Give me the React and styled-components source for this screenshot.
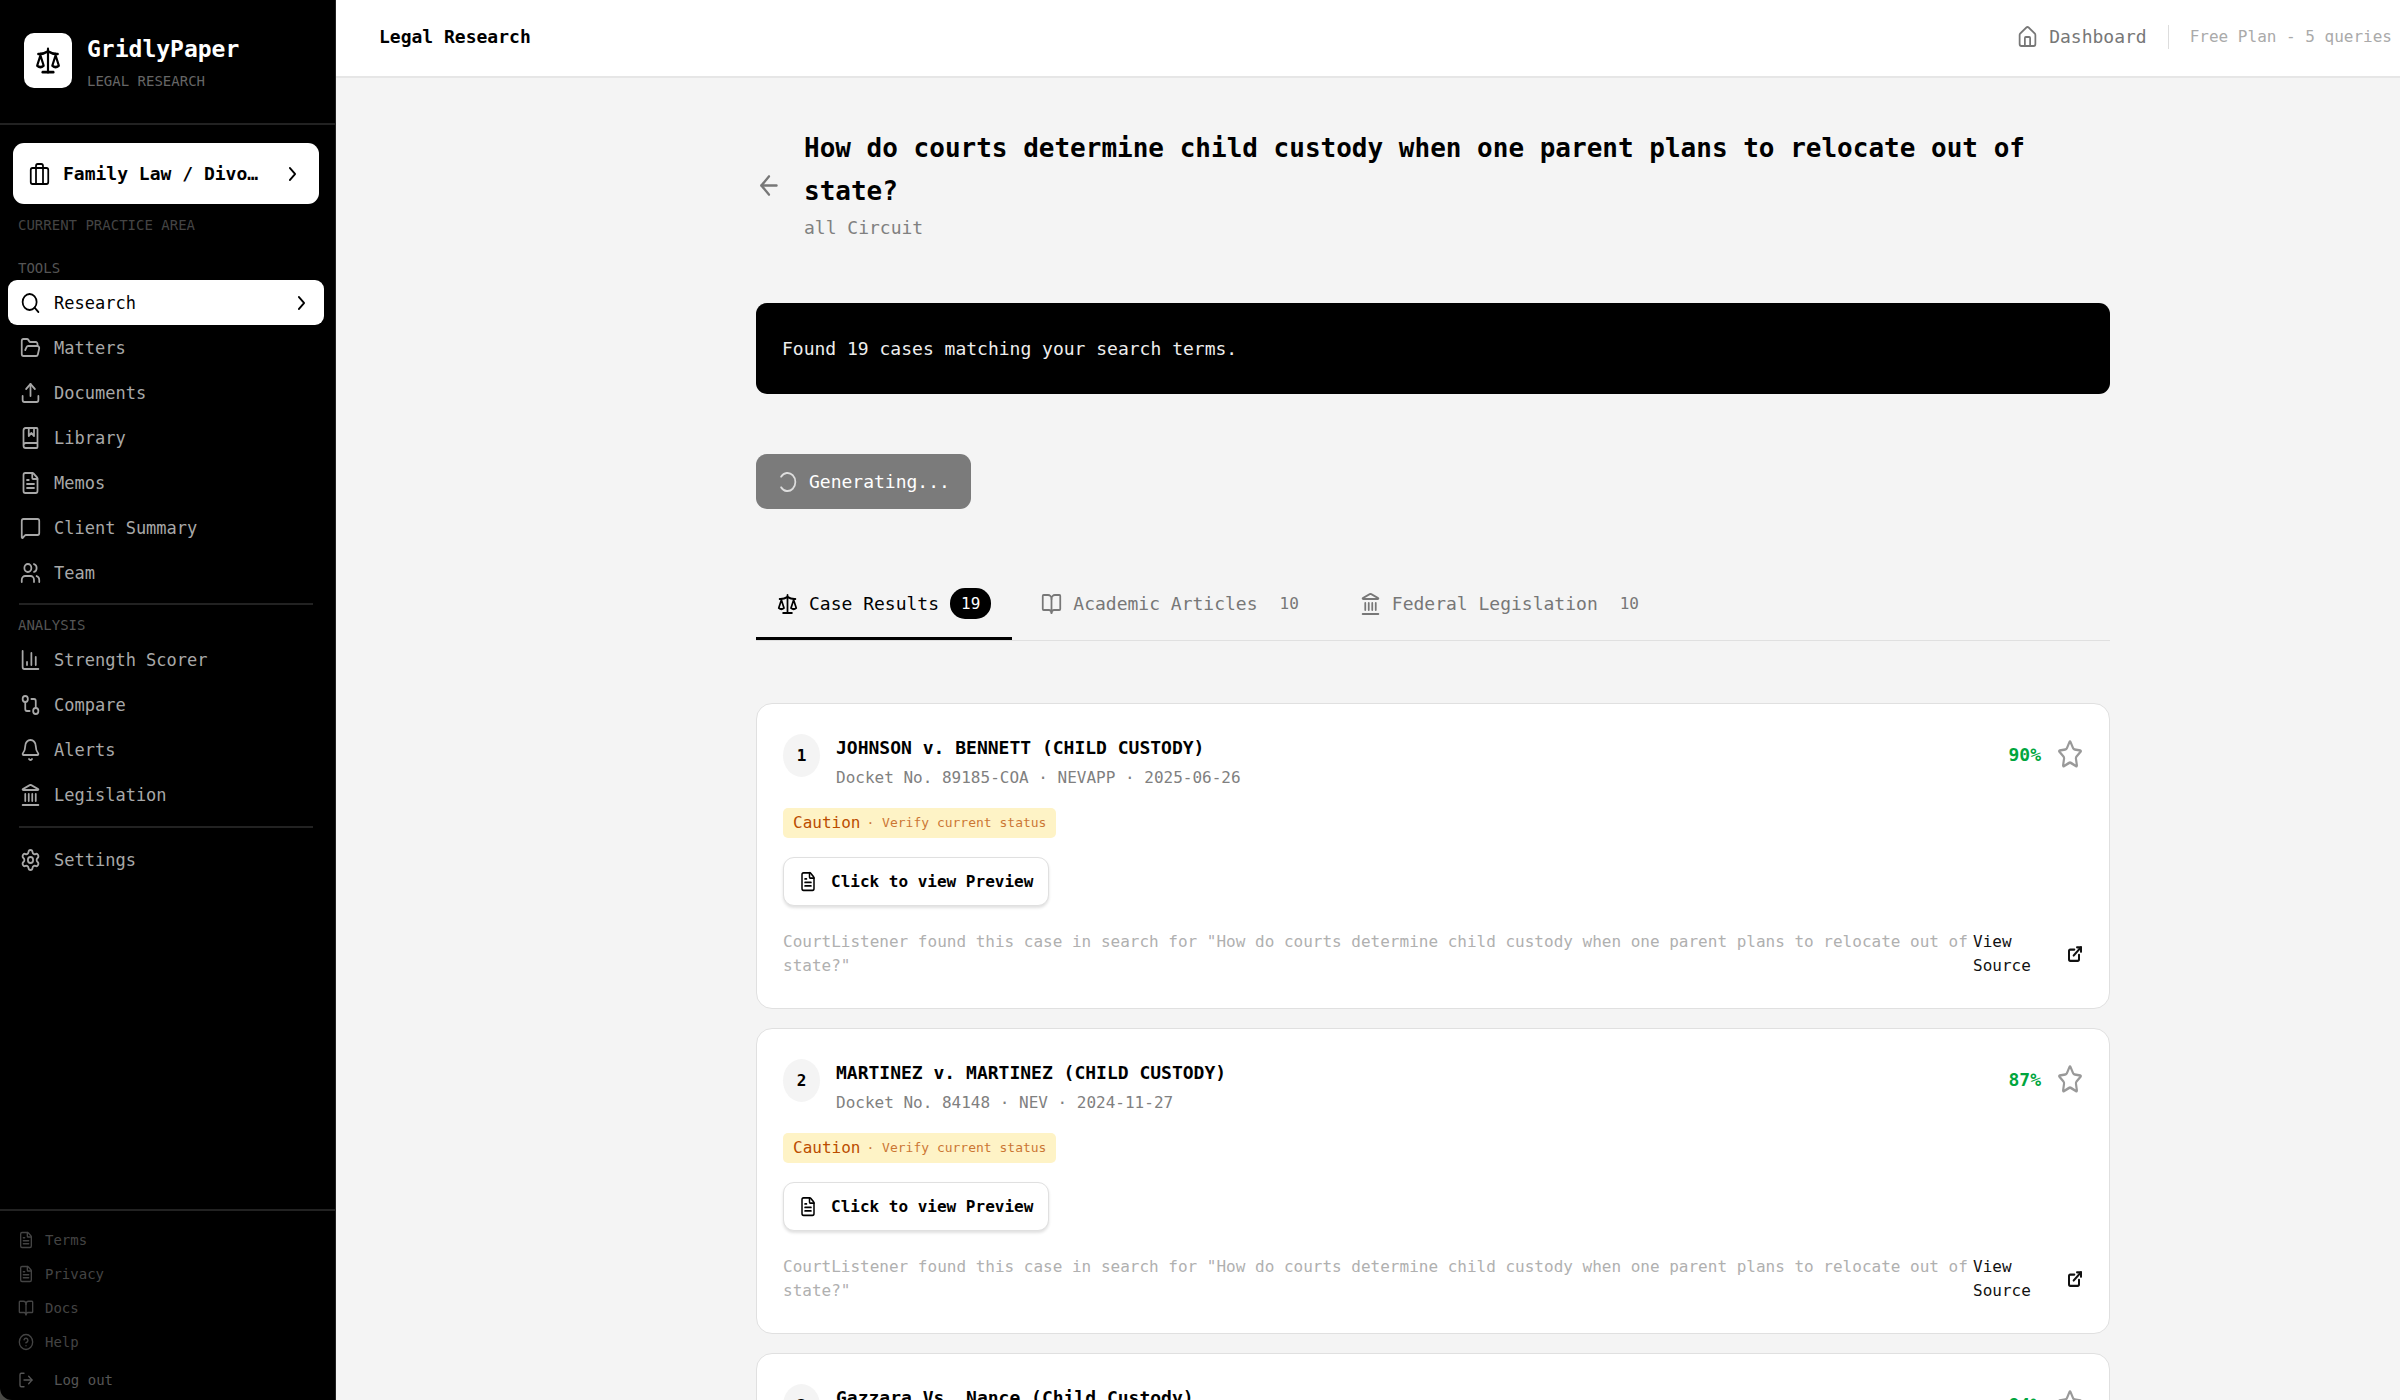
import { useState } from "react";
import styled, { createGlobalStyle, css } from "styled-components";
import {
    ArrowLeft,
    Bell,
    BookMarked,
    BookOpen,
    ChevronRight,
    CircleHelp,
    ExternalLink,
    FileText,
    FolderOpen,
    GitCompare,
    House,
    Landmark,
    LogOut,
    MessageSquare,
    Scale,
    Search,
    Settings,
    Star,
    Upload,
    Users,
} from "lucide-react";

const question = "How do courts determine child custody when one parent plans to relocate out of state?";

const tools = [
    { label: "Research", icon: Search },
    { label: "Matters", icon: FolderOpen },
    { label: "Documents", icon: Upload },
    { label: "Library", icon: BookMarked },
    { label: "Memos", icon: FileText },
    { label: "Client Summary", icon: MessageSquare },
    { label: "Team", icon: Users },
];

const analysis = [
    { label: "Strength Scorer", icon: BarsIcon },
    { label: "Compare", icon: GitCompare },
    { label: "Alerts", icon: Bell },
    { label: "Legislation", icon: Landmark },
];

const footerLinks = [
    { label: "Terms", icon: FileText },
    { label: "Privacy", icon: FileText },
    { label: "Docs", icon: BookOpen },
    { label: "Help", icon: CircleHelp },
];

const tabs = [
    { label: "Case Results", count: 19, icon: Scale },
    { label: "Academic Articles", count: 10, icon: BookOpen },
    { label: "Federal Legislation", count: 10, icon: Landmark },
];

const cases = [
    { name: "JOHNSON v. BENNETT (CHILD CUSTODY)", meta: "Docket No. 89185-COA · NEVAPP · 2025-06-26", score: 90 },
    { name: "MARTINEZ v. MARTINEZ (CHILD CUSTODY)", meta: "Docket No. 84148 · NEV · 2024-11-27", score: 87 },
    { name: "Gazzara Vs. Nance (Child Custody)", meta: "NEV", score: 84 },
];

const iconSizes = {
    small: { width: 16, height: 18 },
    compact: { width: 18, height: 21 },
    medium: { width: 21, height: 24 },
    large: { width: 26, height: 31 },
};

function Icon({ as: Shape, size = "medium", stroke = 2 }) {
    return (
        <Shape
            {...iconSizes[size]}
            strokeWidth={stroke}
            preserveAspectRatio="none"
            aria-hidden="true"
        />
    );
}

function BarsIcon(props) {
    return (
        <svg viewBox="0 0 24 24" fill="none" stroke="currentColor" strokeLinecap="round" strokeLinejoin="round" {...props}>
            <path d="M3 3v16a2 2 0 0 0 2 2h16" />
            <path d="M18 17V9" />
            <path d="M13 17V5" />
            <path d="M8 17v-3" />
        </svg>
    );
}

function CaseIcon(props) {
    return (
        <svg viewBox="0 0 24 24" fill="none" stroke="currentColor" strokeLinecap="round" strokeLinejoin="round" {...props}>
            <rect x="2" y="6" width="20" height="16" rx="2" />
            <path d="M8 22V4a2 2 0 0 1 2-2h4a2 2 0 0 1 2 2v18" />
        </svg>
    );
}

function SpinnerIcon(props) {
    return (
        <svg viewBox="0 0 24 24" fill="none" stroke="#ddd" strokeLinecap="round" strokeLinejoin="round" {...props}>
            <path d="M21 12a9 9 0 1 1-6.219-8.56" transform="rotate(-144 12 12)" />
        </svg>
    );
}

function NavItem({ item, active, onSelect }) {
    return (
        <li>
            <NavLink href="#" $active={active} onClick={() => onSelect(item.label)}>
                <Icon as={item.icon} />
                <span>{item.label}</span>
                {active && <Icon as={ChevronRight} />}
            </NavLink>
        </li>
    );
}

function CaseCard({ index, item }) {
    return (
        <Card>
            <CardTop>
                <Rank>{index}</Rank>
                <CardHeading>
                    <h2>{item.name}</h2>
                    <p>{item.meta}</p>
                </CardHeading>
                <Score>{`${item.score}%`}</Score>
                <StarButton aria-label="Save case">
                    <Icon as={Star} size="large" />
                </StarButton>
            </CardTop>
            <Caution>
                <span>Caution</span>
                <small>· Verify current status</small>
            </Caution>
            <PreviewButton>
                <Icon as={FileText} size="compact" />
                Click to view Preview
            </PreviewButton>
            <CardBottom>
                <p>{`CourtListener found this case in search for "${question}"`}</p>
                <a href="#">
                    <span>View Source</span>
                    <Icon as={ExternalLink} size="small" stroke={3} />
                </a>
            </CardBottom>
        </Card>
    );
}

export default function App() {
    const [page, setPage] = useState("Research");
    const [tab, setTab] = useState("Case Results");

    function renderNav(items) {
        return (
            <NavList>
                {items.map((item) => (
                    <NavItem key={item.label} item={item} active={item.label === page} onSelect={setPage} />
                ))}
            </NavList>
        );
    }

    return (
        <Shell>
            <GlobalStyle />
            <Sidebar>
                <Brand>
                    <Logo>
                        <Icon as={Scale} size="large" />
                    </Logo>
                    <div>
                        <BrandName>GridlyPaper</BrandName>
                        <BrandNote>LEGAL RESEARCH</BrandNote>
                    </div>
                </Brand>
                <PracticeButton>
                    <Icon as={CaseIcon} />
                    <span>Family Law / Divorce</span>
                    <Icon as={ChevronRight} />
                </PracticeButton>
                <PracticeNote>CURRENT PRACTICE AREA</PracticeNote>
                <nav>
                    <NavTitle>TOOLS</NavTitle>
                    {renderNav(tools)}
                    <Divider />
                    <NavTitle>ANALYSIS</NavTitle>
                    {renderNav(analysis)}
                    <Divider $wide />
                    {renderNav([{ label: "Settings", icon: Settings }])}
                </nav>
                <SidebarFooter>
                    {footerLinks.map((link) => (
                        <a key={link.label} href="#">
                            <Icon as={link.icon} size="small" />
                            {link.label}
                        </a>
                    ))}
                    <LogoutButton>
                        <Icon as={LogOut} size="small" />
                        Log out
                    </LogoutButton>
                </SidebarFooter>
            </Sidebar>
            <Main>
                <TopBar>
                    <strong>Legal Research</strong>
                    <DashboardLink href="#">
                        <Icon as={House} />
                        Dashboard
                    </DashboardLink>
                    <Plan>Free Plan - 5 queries</Plan>
                </TopBar>
                <Content>
                    <Container>
                        <Heading>
                            <BackButton aria-label="Back">
                                <Icon as={ArrowLeft} size="large" />
                            </BackButton>
                            <div>
                                <h1>{question}</h1>
                                <p>all Circuit</p>
                            </div>
                        </Heading>
                        <Notice>Found 19 cases matching your search terms.</Notice>
                        <GenerateButton>
                            <Icon as={SpinnerIcon} />
                            Generating...
                        </GenerateButton>
                        <Tabs role="tablist">
                            {tabs.map((item) => (
                                <Tab
                                    key={item.label}
                                    role="tab"
                                    aria-selected={item.label === tab}
                                    $active={item.label === tab}
                                    onClick={() => setTab(item.label)}
                                >
                                    <Icon as={item.icon} />
                                    {item.label}
                                    <Count $active={item.label === tab}>{item.count}</Count>
                                </Tab>
                            ))}
                        </Tabs>
                        <CardList>
                            {cases.map((item, i) => (
                                <CaseCard key={item.name} index={i + 1} item={item} />
                            ))}
                        </CardList>
                    </Container>
                </Content>
            </Main>
        </Shell>
    );
}

const GlobalStyle = createGlobalStyle`
    * {
        box-sizing: border-box;
        margin: 0;
        padding: 0;
    }

    body {
        background-color: #f4f4f4;
        color: #000;
        font-family: "DejaVu Sans Mono", "Liberation Mono", monospace;
        font-size: 18px;
        line-height: 30px;
    }

    button {
        border: none;
        background: none;
        color: inherit;
        font: inherit;
        cursor: pointer;
    }

    a {
        color: inherit;
        text-decoration: none;
    }

    svg {
        display: block;
        flex-shrink: 0;
    }
`;

const Shell = styled.div`
    display: flex;
    height: 100vh;
    overflow: hidden;
    background-color: #4a4a46;
`;

const Sidebar = styled.aside`
    display: flex;
    flex-direction: column;
    flex-shrink: 0;
    width: 336px;
    background-color: #000;
    border-right: 1px solid #222;
    border-bottom-left-radius: 12px;
    color: #fff;
`;

const Brand = styled.div`
    display: flex;
    gap: 15px;
    height: 125px;
    padding: 33px 24px 0;
    border-bottom: 2px solid #222;
`;

const Logo = styled.div`
    display: flex;
    align-items: center;
    justify-content: center;
    width: 48px;
    height: 55px;
    border-radius: 10px;
    background-color: #fff;
    color: #000;
`;

const BrandName = styled.div`
    font-size: 23px;
    font-weight: bold;
    line-height: 32px;
`;

const BrandNote = styled.div`
    color: #666;
    font-size: 14px;
    line-height: 32px;
`;

const PracticeButton = styled.button`
    display: flex;
    align-items: center;
    gap: 13px;
    height: 61px;
    margin: 18px 16px 0 13px;
    padding: 0 16px;
    border-radius: 11px;
    background-color: #fff;
    color: #000;
    font-weight: bold;

    span {
        flex: 1;
        margin-right: 8px;
        overflow: hidden;
        text-align: left;
        text-overflow: ellipsis;
        white-space: nowrap;
    }
`;

const PracticeNote = styled.p`
    margin: 9px 18px 19px;
    color: #444;
    font-size: 14px;
    line-height: 24px;
`;

const NavTitle = styled.h3`
    padding: 0 18px;
    color: #555;
    font-size: 14px;
    font-weight: normal;
    line-height: 24px;
`;

const NavList = styled.ul`
    padding: 0 11px 0 8px;
    list-style: none;
`;

const NavLink = styled.a`
    display: flex;
    align-items: center;
    gap: 13px;
    height: 45px;
    padding: 0 12px;
    border-radius: 9px;
    color: #a8a8a8;
    font-size: 17px;

    span {
        flex: 1;
    }

    ${(props) => props.$active && css`
        background-color: #fff;
        color: #000;
    `}
`;

const Divider = styled.hr`
    margin: ${(props) => (props.$wide ? "9px 22px 9px 19px" : "8px 22px 8px 19px")};
    border: none;
    border-top: 2px solid #222;
`;

const SidebarFooter = styled.div`
    display: flex;
    flex-direction: column;
    margin-top: auto;
    padding: 12px 18px 0;
    border-top: 2px solid #222;
    color: #444;
    font-size: 14px;

    a {
        display: flex;
        align-items: center;
        gap: 11px;
        height: 34px;
    }
`;

const LogoutButton = styled.button`
    display: flex;
    align-items: center;
    gap: 20px;
    height: 41px;
    color: #555;
`;

const Main = styled.main`
    display: flex;
    flex: 1;
    flex-direction: column;
    min-width: 0;
    background-color: #f4f4f4;
`;

const TopBar = styled.header`
    display: flex;
    align-items: center;
    flex-shrink: 0;
    height: 78px;
    padding: 0 8px 3px 43px;
    border-bottom: 2px solid #e6e6e6;
    background-color: #fff;

    strong {
        flex: 1;
    }
`;

const DashboardLink = styled.a`
    display: flex;
    align-items: center;
    gap: 11px;
    color: #777;
`;

const Plan = styled.span`
    margin-left: 21px;
    padding-left: 21px;
    border-left: 1px solid #ddd;
    color: #aaa;
    font-size: 16px;
    line-height: 24px;
`;

const Content = styled.div`
    flex: 1;
    overflow: hidden;
    padding: 49px 0 48px 130px;
`;

const Container = styled.div`
    max-width: 1354px;
    margin: 0 auto;
`;

const Heading = styled.div`
    display: flex;
    align-items: center;
    gap: 22px;
    margin-bottom: 60px;

    h1 {
        font-size: 26px;
        line-height: 43px;
    }

    p {
        color: #808080;
    }
`;

const BackButton = styled.button`
    color: #777;
`;

const Notice = styled.div`
    padding: 31px 26px 30px;
    border-radius: 11px;
    background-color: #000;
    color: #eee;
`;

const GenerateButton = styled.button`
    display: flex;
    align-items: center;
    gap: 11px;
    height: 55px;
    margin: 60px 0 61px;
    padding: 0 21px;
    border-radius: 11px;
    background-color: #7b7b7b;
    color: #fff;
`;

const Tabs = styled.div`
    display: flex;
    gap: 8px;
    border-bottom: 1px solid #e0e0e0;
`;

const Tab = styled.button`
    display: flex;
    align-items: center;
    gap: 11px;
    padding: 18px 21px;
    border-bottom: 3px solid ${(props) => (props.$active ? "#000" : "transparent")};
    color: ${(props) => (props.$active ? "#000" : "#777")};
`;

const Count = styled.span`
    padding: 0 11px;
    border-radius: 15px;
    background-color: ${(props) => (props.$active ? "#000" : "transparent")};
    color: ${(props) => (props.$active ? "#fff" : "#777")};
    font-size: 16px;
    line-height: 31px;
`;

const CardList = styled.div`
    display: flex;
    flex-direction: column;
    gap: 19px;
    margin-top: 62px;
`;

const Card = styled.article`
    padding: 30px 26px;
    border: 1px solid #e0e0e0;
    border-radius: 16px;
    background-color: #fff;
`;

const CardTop = styled.div`
    display: flex;
    margin-bottom: 18px;
`;

const Rank = styled.span`
    width: 37px;
    height: 43px;
    margin-right: 16px;
    border-radius: 50%;
    background-color: #f4f4f4;
    font-size: 16px;
    font-weight: bold;
    line-height: 43px;
    text-align: center;
`;

const CardHeading = styled.div`
    flex: 1;

    h2 {
        font-size: 18px;
        line-height: 28px;
    }

    p {
        margin-top: 4px;
        color: #808080;
        font-size: 16px;
        line-height: 24px;
    }
`;

const Score = styled.strong`
    margin-right: 16px;
    color: #00a63e;
    line-height: 42px;
`;

const StarButton = styled.button`
    height: 40px;
    color: #999;
`;

const Caution = styled.div`
    display: flex;
    align-items: center;
    gap: 6px;
    width: fit-content;
    padding: 0 10px;
    border-radius: 5px;
    background-color: #fef3c6;
    color: #bb4d00;
    font-size: 16px;

    small {
        font-size: 13px;
        opacity: 0.75;
    }
`;

const PreviewButton = styled.button`
    display: flex;
    align-items: center;
    gap: 14px;
    height: 49px;
    margin: 19px 0 24px;
    padding: 0 15px;
    border: 1px solid #e0e0e0;
    border-radius: 11px;
    background-color: #fff;
    box-shadow: 0 2px 3px rgba(0, 0, 0, 0.12);
    font-size: 16px;
    font-weight: bold;
`;

const CardBottom = styled.div`
    display: flex;
    align-items: center;
    justify-content: space-between;
    font-size: 16px;
    line-height: 24px;

    p {
        color: #b0b0b0;
    }

    a {
        display: flex;
        align-items: center;
        justify-content: space-between;
        flex-shrink: 0;
        width: 110px;
        color: #111;
    }

    span {
        width: 60px;
    }
`;
